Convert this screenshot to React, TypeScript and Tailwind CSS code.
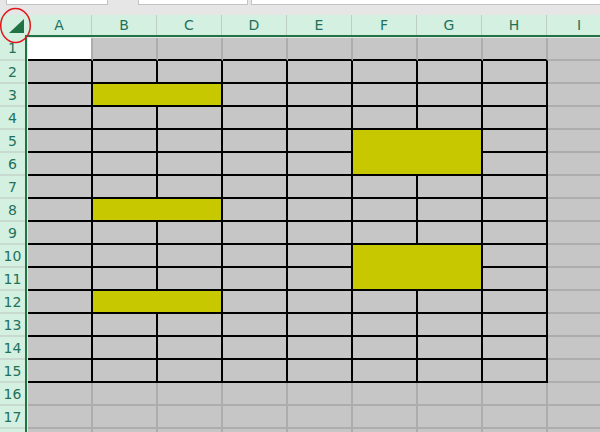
import React from "react";

const COLS = ["A", "B", "C", "D", "E", "F", "G", "H", "I"];
const ROWS = Array.from({ length: 18 }, (_, i) => i + 1);

type Merge = { r: number; c: number; rs: number; cs: number };
const MERGES: Merge[] = [
  { r: 3, c: 1, rs: 1, cs: 2 },
  { r: 5, c: 5, rs: 2, cs: 2 },
  { r: 8, c: 1, rs: 1, cs: 2 },
  { r: 10, c: 5, rs: 2, cs: 2 },
  { r: 12, c: 1, rs: 1, cs: 2 },
];

function mergeAt(r: number, c: number) {
  return MERGES.find((m) => m.r === r && m.c === c);
}
function covered(r: number, c: number) {
  return MERGES.some(
    (m) =>
      r >= m.r && r < m.r + m.rs && c >= m.c && c < m.c + m.cs && !(r === m.r && c === m.c)
  );
}

function Cell({ r, c }: { r: number; c: number }) {
  const m = mergeAt(r, c);
  const rs = m ? m.rs : 1;
  const cs = m ? m.cs : 1;
  const lastR = r + rs - 1;
  const lastC = c + cs - 1;
  const bg = m ? "bg-[#c8c800]" : r === 1 && c === 0 ? "bg-white" : "bg-[#c6c6c6]";
  const rightBlack = r >= 2 && lastR <= 15 && lastC <= 7;
  const bottomBlack = lastR <= 15 && lastC <= 7;
  const rb = rightBlack ? "border-r-[#000000]" : "border-r-[#adadad]";
  const bb = bottomBlack ? "border-b-[#000000]" : "border-b-[#adadad]";
  const span =
    (cs === 2 ? " col-span-2" : "") + (rs === 2 ? " row-span-2" : "");
  return <div className={`${bg} border-r-2 border-b-2 ${rb} ${bb}${span}`} />;
}

export default function App() {
  return (
    <div
      className="relative w-[600px] h-[432px] overflow-hidden bg-[#c6c6c6]"
      style={{ fontFamily: '"DejaVu Sans", sans-serif' }}
    >
      {/* top bar */}
      <div className="flex h-[15px] bg-[#e6e6e6] items-start">
        <div className="ml-[6px] w-[102px] h-[5px] bg-white border border-t-0 border-[#c3c3c3]" />
        <div className="ml-[30px] w-[110px] h-[5px] bg-white border border-t-0 border-[#c3c3c3]" />
        <div className="ml-[3px] flex-1 h-[5px] bg-white border border-t-0 border-r-0 border-[#c3c3c3]" />
      </div>

      <div className="flex">
        {/* row header */}
        <div className="w-[25px] flex flex-col bg-[#d3f0e0]">
          <div className="h-[22px] relative">
            <svg width="25" height="22" className="block">
              <polygon points="9,18 24,18 24,4" fill="#217346" />
            </svg>
          </div>
          {ROWS.map((r) => (
            <div
              key={r}
              className={`${r === 1 ? "h-[24px]" : "h-[23px]"} shrink-0 border-b-2 border-[#c8dacf] flex items-center justify-center text-[14px] leading-none text-[#1f715c]`}
            >
              {r <= 17 ? r : ""}
            </div>
          ))}
        </div>
        {/* vertical green bar */}
        <div className="w-[2px] flex flex-col">
          <div className="h-[20px] bg-[#d3f0e0]" />
          <div className="flex-1 bg-[#217346]" />
        </div>
        {/* sheet */}
        <div className="flex-1 flex flex-col min-w-0">
          <div className="h-[20px] flex bg-[#d3f0e0]">
            {COLS.map((c) => (
              <div
                key={c}
                className="w-[65px] shrink-0 border-r border-[#bfcfc5] flex items-center justify-center text-[14px] leading-none text-[#1f715c]"
              >
                {c}
              </div>
            ))}
          </div>
          <div className="h-[2px] bg-[#217346]" />
          <div className="pl-[1px] pt-[1px] bg-[#e6e6e6]">
            <div className="grid grid-cols-[repeat(9,65px)] auto-rows-[23px] bg-[#c6c6c6]">
              {ROWS.map((r) =>
                COLS.map((_, c) =>
                  covered(r, c) ? null : <Cell key={`${r}-${c}`} r={r} c={c} />
                )
              )}
            </div>
          </div>
        </div>
      </div>

      {/* red annotation circle */}
      <svg
        className="absolute left-0 top-0 pointer-events-none"
        width="40"
        height="48"
      >
        <ellipse cx="15.5" cy="25.5" rx="14.8" ry="17" fill="none" stroke="#e3171b" strokeWidth="1.5" />
      </svg>
    </div>
  );
}
